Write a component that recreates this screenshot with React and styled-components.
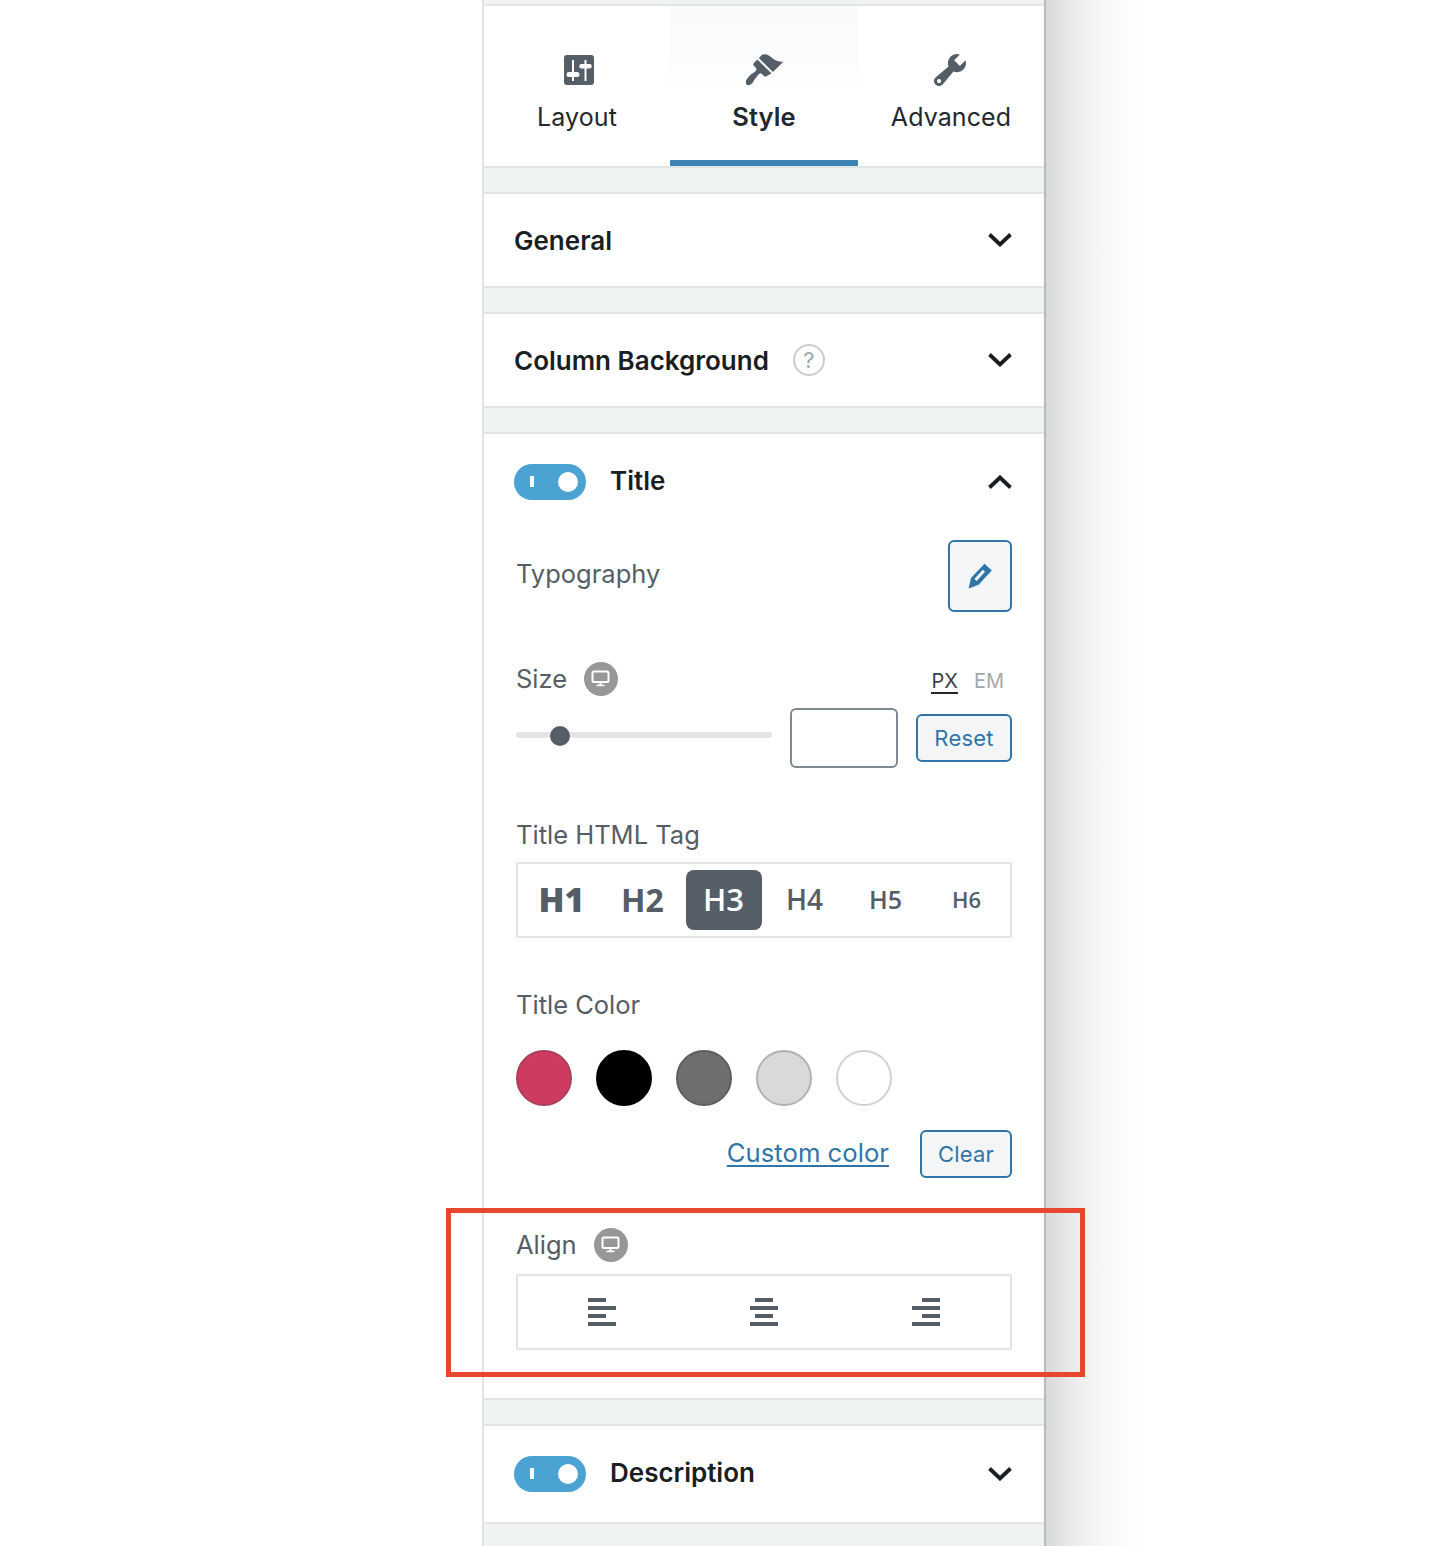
import React from 'react';
import styled, { createGlobalStyle } from 'styled-components';

const GlobalStyle = createGlobalStyle`
  html, body { margin: 0; padding: 0; background: #fff; }
  body { font-family: Inter, "Noto Sans", "Liberation Sans", sans-serif; }
  * { box-sizing: border-box; }
`;

const Desktop = () => (
  <svg width="20" height="18" viewBox="0 0 20 18">
    <rect x="1.5" y="1.5" width="16" height="10.5" rx="1.5" fill="none" stroke="#fff" strokeWidth="2" />
    <rect x="8.5" y="12.5" width="2" height="3" fill="#fff" />
    <rect x="5.5" y="14.6" width="8" height="1.6" fill="#fff" />
  </svg>
);

const Chevron = ({ up }) => (
  <svg width="24" height="14" viewBox="0 0 24 14">
    <path d={up ? 'M1.5 12.5L12 2.5L22.5 12.5' : 'M1.5 1.5L12 11.5L22.5 1.5'} fill="none" stroke="#191e23" strokeWidth="3.8" />
  </svg>
);

const LayoutIcon = () => (
  <svg width="30" height="30" viewBox="0 0 30 30">
    <rect width="30" height="30" rx="3" fill="#555d66" />
    <path d="M8 5h2v21H8zM5 17h8a1.5 1.5 0 0 1 0 5H5a1.5 1.5 0 0 1 0-5zM20.5 5h2v21h-2zM17.5 9h8a1.5 1.5 0 0 1 0 4.6h-8a1.5 1.5 0 0 1 0-4.6z" fill="#fff" />
  </svg>
);

const BrushIcon = () => (
  <svg width="40" height="40" viewBox="0 0 20 20">
    <path
      d="M14.48 11.06L7.41 3.99l1.5-1.5c.5-.56 2.3-.47 3.51.32 1.21.8 1.43 1.28 2.91 2.1 1.18.64 2.45 1.26 4.45.85zm-.71.71L6.7 4.7 4.93 6.47c-.39.39-.39 1.02 0 1.41l1.06 1.06c.39.39.39 1.03 0 1.42-.6.6-1.43 1.11-2.21 1.69-.35.26-.7.53-1.01.84-1.6 1.5-2.4 3.4-1.5 4.3.9.9 2.8.2 3.7-2 .3-.3.6-.7.85-1.05.58-.78 1.09-1.6 1.69-2.2.39-.39 1.03-.39 1.42 0l1.06 1.06c.39.39 1.02.39 1.41 0z"
      fill="#555d66"
    />
  </svg>
);

const WrenchIcon = () => (
  <svg width="40" height="40" viewBox="0 0 20 20">
    <path
      d="M16.68 9.77c-1.34 1.34-3.3 1.67-4.95.99l-5.41 6.52c-.99.99-2.59.99-3.58 0s-.99-2.59 0-3.57l6.52-5.42c-.68-1.65-.35-3.61.99-4.95 1.28-1.28 3.12-1.62 4.72-1.06l-2.89 2.89 2.82 2.82 2.86-2.87c.53 1.58.18 3.39-1.08 4.67zM3.81 16.21c.4.39 1.04.39 1.43 0 .4-.4.4-1.04 0-1.43-.39-.4-1.03-.4-1.43 0-.39.39-.39 1.03 0 1.43z"
      fill="#555d66"
    />
  </svg>
);

const PencilIcon = () => (
  <svg width="24" height="26" viewBox="0 0 24 26">
    <path
      d="M16.5 .8L23.8 7.4 10.6 21.8 .6 25.4 3 15zM14.8 6.8L6.4 16l2.2 2 8.4-9.2z"
      fill="#2f75a8"
      fillRule="evenodd"
    />
  </svg>
);

const AlignIcon = ({ side }) => {
  const shortX = side === 'left' ? 0 : side === 'center' ? 5 : 10;
  return (
    <svg width="28" height="28" viewBox="0 0 28 28">
      <rect x={shortX} y="0" width="18" height="4" fill="#555d66" />
      <rect x="0" y="8" width="28" height="4" fill="#555d66" />
      <rect x={shortX} y="16" width="18" height="4" fill="#555d66" />
      <rect x="0" y="24" width="28" height="4" fill="#555d66" />
    </svg>
  );
};

const Page = styled.div`
  position: relative;
  display: flex;
  height: 1546px;
  overflow: hidden;
  padding-left: 482px;
`;

const Panel = styled.div`
  width: 564px;
  height: 1546px;
  overflow: hidden;
  background: #f0f3f4;
  border-left: 2px solid #e2e4e7;
  border-right: 2px solid #b9bbbe;
  padding-top: 4px;
`;

const Shade = styled.div`
  width: 96px;
  background: linear-gradient(90deg, #d6d8da 0%, #e8eaeb 25%, #f4f6f7 55%, #fbfcfd 80%, #fff 100%);
`;

const Tabs = styled.div`
  display: grid;
  grid-template-columns: 186px 188px 186px;
  height: 164px;
  background: #fff;
  border-top: 2px solid #e2e4e7;
  border-bottom: 2px solid #e2e4e7;
  margin-bottom: 24px;
`;

const Tab = styled.div`
  display: flex;
  flex-direction: column;
  align-items: center;
  height: 160px;
  color: #23282d;
  font-size: ${(p) => (p.$active ? 25.5 : 25)}px;
  font-weight: ${(p) => (p.$active ? 600 : 400)};
  background: ${(p) => (p.$active ? 'linear-gradient(180deg, #f9fafc 0%, #fbfcfd 40%, #fff 60%)' : '#fff')};
  border-bottom: ${(p) => (p.$active ? '6px solid #3c84b6' : '0')};
`;

const TabIcon = styled.div`
  display: flex;
  align-items: center;
  justify-content: center;
  height: 40px;
  margin-top: 44px;
  margin-left: ${(p) => p.$nudge || 0}px;
`;

const TabLabel = styled.div`
  margin-top: 9px;
  line-height: 36px;
  letter-spacing: 0.1px;
`;

const Section = styled.section`
  background: #fff;
  border-top: 2px solid #e2e4e7;
  border-bottom: 2px solid #e2e4e7;
  margin-bottom: 24px;
`;

const Head = styled.div`
  display: flex;
  align-items: center;
  height: ${(p) => p.$h || 92}px;
  padding: 0 32px 0 30px;
`;

const HeadTitle = styled.div`
  color: #191e23;
  font-size: 26px;
  font-weight: 600;
  margin-bottom: ${(p) => (p.$raised ? 4 : 0)}px;
`;

const ChevronSlot = styled.div`
  display: flex;
  margin-left: auto;
`;

const Help = styled.div`
  display: flex;
  align-items: center;
  justify-content: center;
  width: 32px;
  height: 32px;
  margin-left: 24px;
  border: 2px solid #c9cbce;
  border-radius: 50%;
  background: #fbfcfc;
  color: #a2a6aa;
  font-size: 22px;
`;

const Toggle = styled.div`
  position: relative;
  flex: none;
  width: 72px;
  height: 36px;
  margin-right: 24px;
  border-radius: 18px;
  background: #4ba3d3;

  &::before {
    content: '';
    position: absolute;
    left: 16px;
    top: 12px;
    width: 4px;
    height: 11px;
    background: #fff;
  }

  &::after {
    content: '';
    position: absolute;
    right: 8px;
    top: 8px;
    width: 20px;
    height: 20px;
    border-radius: 50%;
    background: #fff;
  }
`;

const Body = styled.div`
  padding: 10px 32px 48px;
`;

const Label = styled.div`
  color: #555d66;
  font-size: 25.5px;
  line-height: 34px;
`;

const TypoRow = styled.div`
  display: flex;
  align-items: center;
  justify-content: space-between;
  height: 72px;
  padding-bottom: 4px;
`;

const PencilButton = styled.div`
  display: flex;
  align-items: center;
  justify-content: center;
  width: 64px;
  height: 72px;
  margin-bottom: -4px;
  border: 2px solid #2f75a8;
  border-radius: 6px;
  background: #f3f5f6;
`;

const LabelRow = styled.div`
  display: flex;
  align-items: center;
  height: 34px;
  margin-top: ${(p) => p.$top || 0}px;
`;

const DeviceBadge = styled.div`
  display: flex;
  align-items: center;
  justify-content: center;
  width: 34px;
  height: 34px;
  margin-left: 17px;
  border-radius: 50%;
  background: #979797;
`;

const Units = styled.div`
  display: flex;
  gap: 16px;
  margin-left: auto;
  margin-right: 8px;
  margin-top: 6px;
`;

const Unit = styled.span`
  color: ${(p) => (p.$on ? '#3b4148' : '#a4a8ac')};
  font-size: 20px;
  line-height: 22px;
  border-bottom: ${(p) => (p.$on ? '2px solid #23282d' : '2px solid transparent')};
`;

const SliderRow = styled.div`
  display: flex;
  align-items: center;
  height: 60px;
  margin-top: 12px;
`;

const Track = styled.div`
  position: relative;
  width: 256px;
  height: 6px;
  margin-bottom: 6px;
  border-radius: 3px;
  background: #e2e4e7;
`;

const Knob = styled.div`
  position: absolute;
  left: 34px;
  top: -6px;
  width: 20px;
  height: 20px;
  border-radius: 50%;
  background: #555d66;
`;

const NumberBox = styled.div`
  width: 108px;
  height: 60px;
  margin-left: 18px;
  border: 2px solid #7e8993;
  border-radius: 6px;
`;

const OutlineButton = styled.div`
  display: flex;
  align-items: center;
  justify-content: center;
  width: ${(p) => p.$w}px;
  height: 48px;
  margin-left: ${(p) => p.$left}px;
  padding-bottom: 1px;
  border: 2px solid #2f75a8;
  border-radius: 6px;
  background: #f3f5f6;
  color: #2f75a8;
  font-size: 22px;
  letter-spacing: 0.2px;
`;

const Group = styled.div`
  display: grid;
  grid-template-columns: repeat(${(p) => p.$cols}, 1fr);
  height: 76px;
  margin-top: ${(p) => p.$top}px;
  padding: 6px 3px;
  border: 2px solid #e2e4e7;
  background: #fff;
`;

const TagButton = styled.div`
  display: flex;
  align-items: center;
  justify-content: center;
  margin: 0 2.5px;
  padding-bottom: 2px;
  border-radius: 8px;
  color: ${(p) => (p.$active ? '#fff' : '#555d66')};
  background: ${(p) => (p.$active ? '#555d66' : 'transparent')};
  font-family: "Open Sans", "Noto Sans", sans-serif;
  font-size: ${(p) => p.$size}px;
  font-weight: ${(p) => p.$weight};
`;

const AlignButton = styled.div`
  display: flex;
  align-items: center;
  justify-content: center;
`;

const Swatches = styled.div`
  display: flex;
  gap: 24px;
  margin-top: 28px;
`;

const Swatch = styled.div`
  width: 56px;
  height: 56px;
  border-radius: 50%;
  background: ${(p) => p.$color};
  border: 2px solid ${(p) => p.$edge};
`;

const ColorActions = styled.div`
  display: flex;
  align-items: center;
  justify-content: flex-end;
  margin-top: 24px;
`;

const CustomLink = styled.a`
  margin-bottom: 4px;
  color: #2f75a8;
  font-size: 25.7px;
  text-decoration: underline;
  text-underline-offset: 3px;
  text-decoration-thickness: 2px;
`;

const Callout = styled.div`
  position: absolute;
  left: 446px;
  top: 1208px;
  width: 639px;
  height: 169px;
  border: 5px solid #e8472f;
  pointer-events: none;
`;

const tags = [
  { name: 'H1', size: 34, weight: 800 },
  { name: 'H2', size: 32, weight: 700 },
  { name: 'H3', size: 31, weight: 600, active: true },
  { name: 'H4', size: 28, weight: 600 },
  { name: 'H5', size: 25, weight: 600 },
  { name: 'H6', size: 22, weight: 600 },
];

const swatches = [
  { color: '#cf3a5f', edge: '#a8405c' },
  { color: '#000', edge: '#000' },
  { color: '#6d6e70', edge: '#5c5d5f' },
  { color: '#d8d9db', edge: '#b0b1b3' },
  { color: '#fff', edge: '#d0d1d3' },
];

const App = () => (
  <>
    <GlobalStyle />
    <Page>
      <Panel>
        <Tabs>
          <Tab>
            <TabIcon $nudge={4}><LayoutIcon /></TabIcon>
            <TabLabel>Layout</TabLabel>
          </Tab>
          <Tab $active>
            <TabIcon><BrushIcon /></TabIcon>
            <TabLabel>Style</TabLabel>
          </Tab>
          <Tab>
            <TabIcon $nudge={-2}><WrenchIcon /></TabIcon>
            <TabLabel>Advanced</TabLabel>
          </Tab>
        </Tabs>

        <Section>
          <Head>
            <HeadTitle>General</HeadTitle>
            <ChevronSlot><Chevron /></ChevronSlot>
          </Head>
        </Section>

        <Section>
          <Head>
            <HeadTitle>Column Background</HeadTitle>
            <Help>?</Help>
            <ChevronSlot><Chevron /></ChevronSlot>
          </Head>
        </Section>

        <Section>
          <Head $h={96}>
            <Toggle />
            <HeadTitle $raised>Title</HeadTitle>
            <ChevronSlot><Chevron up /></ChevronSlot>
          </Head>
          <Body>
            <TypoRow>
              <Label>Typography</Label>
              <PencilButton><PencilIcon /></PencilButton>
            </TypoRow>

            <LabelRow $top={50}>
              <Label>Size</Label>
              <DeviceBadge><Desktop /></DeviceBadge>
              <Units>
                <Unit $on>PX</Unit>
                <Unit>EM</Unit>
              </Units>
            </LabelRow>
            <SliderRow>
              <Track><Knob /></Track>
              <NumberBox />
              <OutlineButton $w={96} $left={18}>Reset</OutlineButton>
            </SliderRow>

            <LabelRow $top={50}><Label>Title HTML Tag</Label></LabelRow>
            <Group $cols={6} $top={10}>
              {tags.map((t) => (
                <TagButton key={t.name} $size={t.size} $weight={t.weight} $active={t.active}>
                  {t.name}
                </TagButton>
              ))}
            </Group>

            <LabelRow $top={50}><Label>Title Color</Label></LabelRow>
            <Swatches>
              {swatches.map((s) => (
                <Swatch key={s.color} $color={s.color} $edge={s.edge} />
              ))}
            </Swatches>
            <ColorActions>
              <CustomLink>Custom color</CustomLink>
              <OutlineButton $w={92} $left={31}>Clear</OutlineButton>
            </ColorActions>

            <LabelRow $top={50}>
              <Label>Align</Label>
              <DeviceBadge><Desktop /></DeviceBadge>
            </LabelRow>
            <Group $cols={3} $top={12}>
              <AlignButton><AlignIcon side="left" /></AlignButton>
              <AlignButton><AlignIcon side="center" /></AlignButton>
              <AlignButton><AlignIcon side="right" /></AlignButton>
            </Group>
          </Body>
        </Section>

        <Section>
          <Head $h={96}>
            <Toggle />
            <HeadTitle $raised>Description</HeadTitle>
            <ChevronSlot><Chevron /></ChevronSlot>
          </Head>
        </Section>
      </Panel>
      <Shade />
      <Callout />
    </Page>
  </>
);

export default App;
